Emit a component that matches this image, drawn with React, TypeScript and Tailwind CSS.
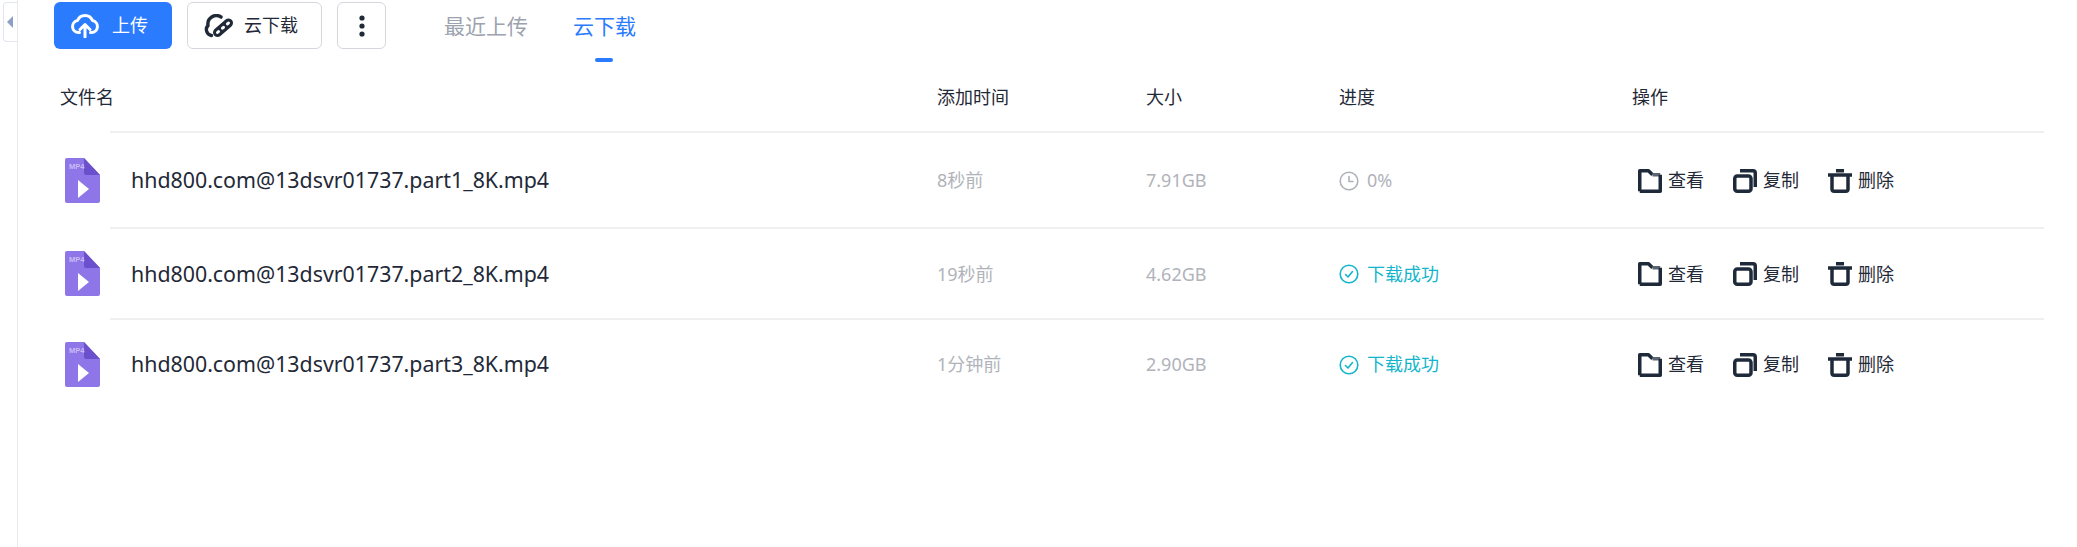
import React from "react";

const font = { fontFamily: '"Noto Sans", "Noto Sans CJK SC", sans-serif' };

function UploadIcon() {
  return (
    <svg width="28" height="25" viewBox="0 0 28 25" fill="none" stroke="#fff" strokeWidth="3" strokeLinecap="round" strokeLinejoin="round">
      <path d="M8.5 19.5 H7.5 a6 6 0 0 1 -1 -11.9 A8 8 0 0 1 21.5 7.6 a6 6 0 0 1 -1 11.9 h-1" />
      <path d="M14 24 V11.5 M9 16.5 l5 -5 5 5" />
    </svg>
  );
}

function CloudLinkIcon() {
  return (
    <svg width="30" height="24" viewBox="0 0 30 24" fill="none" strokeLinecap="round">
      <path d="M7.5 21.5 A6 6 0 0 1 4 11.5 A8.5 8.5 0 0 1 17 3" stroke="#1f2937" strokeWidth="3.4" />
      <path d="M13.5 18.5 L24.5 9" stroke="#1f2937" strokeWidth="9" />
      <path d="M13.5 18.5 L14.5 17.6 M23.5 9.9 L24.5 9 M18.5 14.2 L19.5 13.3" stroke="#fff" strokeWidth="3" />
    </svg>
  );
}

function MoreIcon() {
  return (
    <svg width="6" height="22" viewBox="0 0 6 22" fill="#1f2937">
      <circle cx="3" cy="3" r="2.6" />
      <circle cx="3" cy="11" r="2.6" />
      <circle cx="3" cy="19" r="2.6" />
    </svg>
  );
}

function Mp4Icon() {
  return (
    <svg width="35" height="45" viewBox="0 0 35 45" className="block">
      <path d="M2 0 H19 L35 17 V43 a2 2 0 0 1 -2 2 H2 a2 2 0 0 1 -2 -2 V2 a2 2 0 0 1 2 -2 z" fill="#8e75e8" />
      <path d="M19 0 L35 17 H21 a2 2 0 0 1 -2 -2 z" fill="#6a50cc" />
      <text x="4" y="11" fontSize="7.5" fontWeight="700" fill="#c9bcf5" fontFamily="Liberation Sans, sans-serif">MP4</text>
      <path d="M13 22 L24 31 L13 40 z" fill="#fff" />
    </svg>
  );
}

function FolderIcon() {
  return (
    <svg width="24" height="24" viewBox="0 0 24 24" fill="none" strokeWidth="3.5" strokeLinejoin="round">
      <path d="M1.75 22.25 V1.75 H10.5 L14.5 5.75" stroke="#1e2a3a" />
      <path d="M14.5 5.75 H22.25" stroke="#5c6673" />
      <path d="M22.25 5.75 V22.25 H1.75" stroke="#1e2a3a" />
    </svg>
  );
}

function CopyIcon() {
  return (
    <svg width="24" height="24" viewBox="0 0 24 24" fill="none" strokeWidth="3.5" strokeLinejoin="round">
      <path d="M7 1.75 H20 a2.25 2.25 0 0 1 2.25 2.25 V18" stroke="#1e2a3a" />
      <rect x="1.75" y="7" width="16.25" height="15.25" rx="2.5" stroke="#1e2a3a" />
    </svg>
  );
}

function TrashIcon() {
  return (
    <svg width="24" height="24" viewBox="0 0 24 24" fill="none" stroke="#1e2a3a" strokeWidth="3.5">
      <path d="M0 6 H24" />
      <path d="M8 1.75 H16" />
      <path d="M4 6 V20 a2.25 2.25 0 0 0 2.25 2.25 H17.75 a2.25 2.25 0 0 0 2.25 -2.25 V6" />
    </svg>
  );
}

function ClockIcon() {
  return (
    <svg width="20" height="20" viewBox="0 0 20 20" fill="none" stroke="#aeb1b8" strokeWidth="1.6" strokeLinecap="round" strokeLinejoin="round">
      <circle cx="10" cy="10" r="8.8" />
      <path d="M10 5.5 V10.5 H14" />
    </svg>
  );
}

function CheckIcon() {
  return (
    <svg width="20" height="20" viewBox="0 0 20 20" fill="none" stroke="#12b5cb" strokeWidth="1.6" strokeLinecap="round" strokeLinejoin="round">
      <circle cx="10" cy="10" r="8.8" />
      <path d="M6.5 10.5 L9 13 L13.5 7.5" />
    </svg>
  );
}

function Action({ icon, label }: { icon: React.ReactNode; label: string }) {
  return (
    <div className="flex w-[95px] items-center gap-[6px] text-[18px] text-[#1f2937]">
      {icon}
      <span>{label}</span>
    </div>
  );
}

const rows = [
  { name: "hhd800.com@13dsvr01737.part1_8K.mp4", time: "8秒前", size: "7.91GB", done: false, h: "h-[96px]" },
  { name: "hhd800.com@13dsvr01737.part2_8K.mp4", time: "19秒前", size: "4.62GB", done: true, h: "h-[91px]" },
  { name: "hhd800.com@13dsvr01737.part3_8K.mp4", time: "1分钟前", size: "2.90GB", done: true, h: "h-[90px]" },
];

export default function App() {
  return (
    <div className="flex h-[547px] w-[2077px] overflow-hidden bg-white" style={font}>
      <aside className="w-[18px] shrink-0 border-r border-[#e8eaef] pl-[3px] pt-[2px]">
        <div className="flex h-[40px] w-[14px] items-center rounded-l-[4px] border border-r-0 border-[#e2e6ee] pl-[3px]">
          <div className="h-0 w-0 border-y-[6px] border-r-[6px] border-y-transparent border-r-[#8aa0c4]" />
        </div>
      </aside>

      <main className="w-[2026px] shrink-0 pl-[36px]">
        <div className="flex h-[65px] items-start pt-[2px]">
          <button className="flex h-[47px] w-[118px] items-center rounded-[6px] bg-[#2b7bff] pl-[17px] text-[18px] text-white">
            <UploadIcon />
            <span className="ml-[13px]">上传</span>
          </button>
          <button className="ml-[15px] flex h-[47px] w-[135px] items-center rounded-[6px] border border-[#d4d7dd] bg-white pl-[16px] text-[18px] text-[#1f2937]">
            <CloudLinkIcon />
            <span className="ml-[10px]">云下载</span>
          </button>
          <button className="ml-[15px] flex h-[47px] w-[49px] items-center justify-center rounded-[6px] border border-[#d4d7dd] bg-white">
            <MoreIcon />
          </button>
          <div className="ml-[58px] flex h-[50px] items-center text-[21px]">
            <span className="text-[#9ca3af]">最近上传</span>
            <span className="relative ml-[45px] text-[#2b7bff]">
              云下载
              <span className="absolute left-[22px] top-[47px] h-[4px] w-[18px] rounded-full bg-[#2b7bff]" />
            </span>
          </div>
        </div>

        <div className="grid h-[66px] grid-cols-[877px_209px_193px_293px_412px] items-center pb-[2px] pl-[6px] text-[18px] text-[#1f2937]">
          <span>文件名</span>
          <span>添加时间</span>
          <span>大小</span>
          <span>进度</span>
          <span>操作</span>
        </div>

        {rows.map((r) => (
          <div key={r.name} className={`flex ${r.h}`}>
            <div className="flex w-[56px] shrink-0 items-center pl-[11px] pt-[2px]">
              <Mp4Icon />
            </div>
            <div className="grid w-[1934px] grid-cols-[827px_209px_193px_293px_412px] items-center border-t-2 border-[#eeeff1] pt-[1px]">
              <span className="pl-[21px] text-[21.35px] text-[#1f2937]">{r.name}</span>
              <span className="text-[18px] text-[#b0b3ba]">{r.time}</span>
              <span className="text-[18px] text-[#b0b3ba]">{r.size}</span>
              {r.done ? (
                <span className="flex items-center gap-[8px] text-[18px] text-[#12b5cb]">
                  <CheckIcon />
                  下载成功
                </span>
              ) : (
                <span className="flex items-center gap-[8px] text-[18px] text-[#b0b3ba]">
                  <ClockIcon />
                  0%
                </span>
              )}
              <div className="flex pl-[6px]">
                <Action icon={<FolderIcon />} label="查看" />
                <Action icon={<CopyIcon />} label="复制" />
                <Action icon={<TrashIcon />} label="删除" />
              </div>
            </div>
          </div>
        ))}
      </main>
    </div>
  );
}
